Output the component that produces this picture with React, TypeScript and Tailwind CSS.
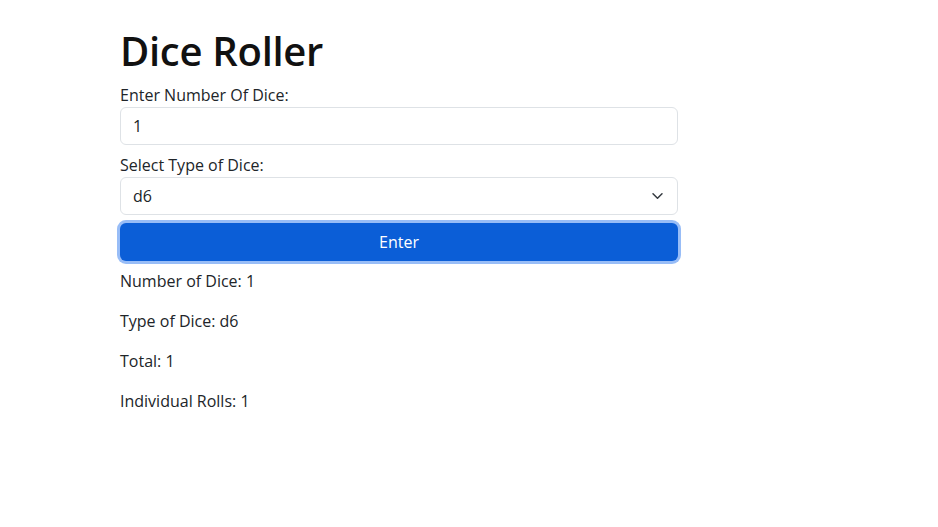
import React, { useState } from "react";

const App = () => {
  const [count, setCount] = useState("1");
  const [die, setDie] = useState("d6");
  const [result, setResult] = useState({ count: "1", die: "d6", total: 1, rolls: [1] });

  const roll = () => {
    const n = Math.max(1, parseInt(count) || 1);
    const sides = parseInt(die.slice(1));
    const rolls = Array.from({ length: n }, () => Math.floor(Math.random() * sides) + 1);
    setResult({ count: String(n), die, total: rolls.reduce((a, b) => a + b, 0), rolls });
  };

  return (
    <div
      className="min-h-[527px] w-full bg-white text-[16px] leading-6 text-[#212529]"
      style={{ fontFamily: '"Open Sans", "Noto Sans", sans-serif' }}
    >
      <div className="ml-[120px] w-[558px] pt-[27px]">
        <h1 className="mb-2 text-[40px] leading-[48px] font-semibold tracking-[-0.3px] text-[#111]">Dice Roller</h1>

        <label className="block">Enter Number Of Dice:</label>
        <input
          value={count}
          onChange={(e) => setCount(e.target.value)}
          className="block h-[38px] w-full rounded-[6px] border border-[#dee2e6] px-3 outline-none"
        />

        <label className="mt-2 block">Select Type of Dice:</label>
        <div className="relative">
          <select
            value={die}
            onChange={(e) => setDie(e.target.value)}
            className="block h-[38px] w-full appearance-none rounded-[6px] border border-[#dee2e6] bg-white px-3 outline-none"
          >
            {["d4", "d6", "d8", "d10", "d12", "d20"].map((d) => (
              <option key={d}>{d}</option>
            ))}
          </select>
          <svg
            className="pointer-events-none absolute top-[13px] right-[14px]"
            width="13"
            height="12"
            viewBox="0 0 16 16"
            fill="none"
            stroke="#343a40"
            strokeWidth="2"
            strokeLinecap="round"
            strokeLinejoin="round"
          >
            <path d="m2 5 6 6 6-6" />
          </svg>
        </div>

        <button
          onClick={roll}
          className="mt-2 block h-[38px] w-full rounded-[6px] bg-[#0b5ed7] text-white shadow-[0_0_0_3px_#98bdf7]"
        >
          Enter
        </button>

        <div className="mt-2">
          <p className="mb-4">Number of Dice: {result.count}</p>
          <p className="mb-4">Type of Dice: {result.die}</p>
          <p className="mb-4">Total: {result.total}</p>
          <p className="mb-4">Individual Rolls: {result.rolls.join(", ")}</p>
        </div>
      </div>
    </div>
  );
};

export default App;
